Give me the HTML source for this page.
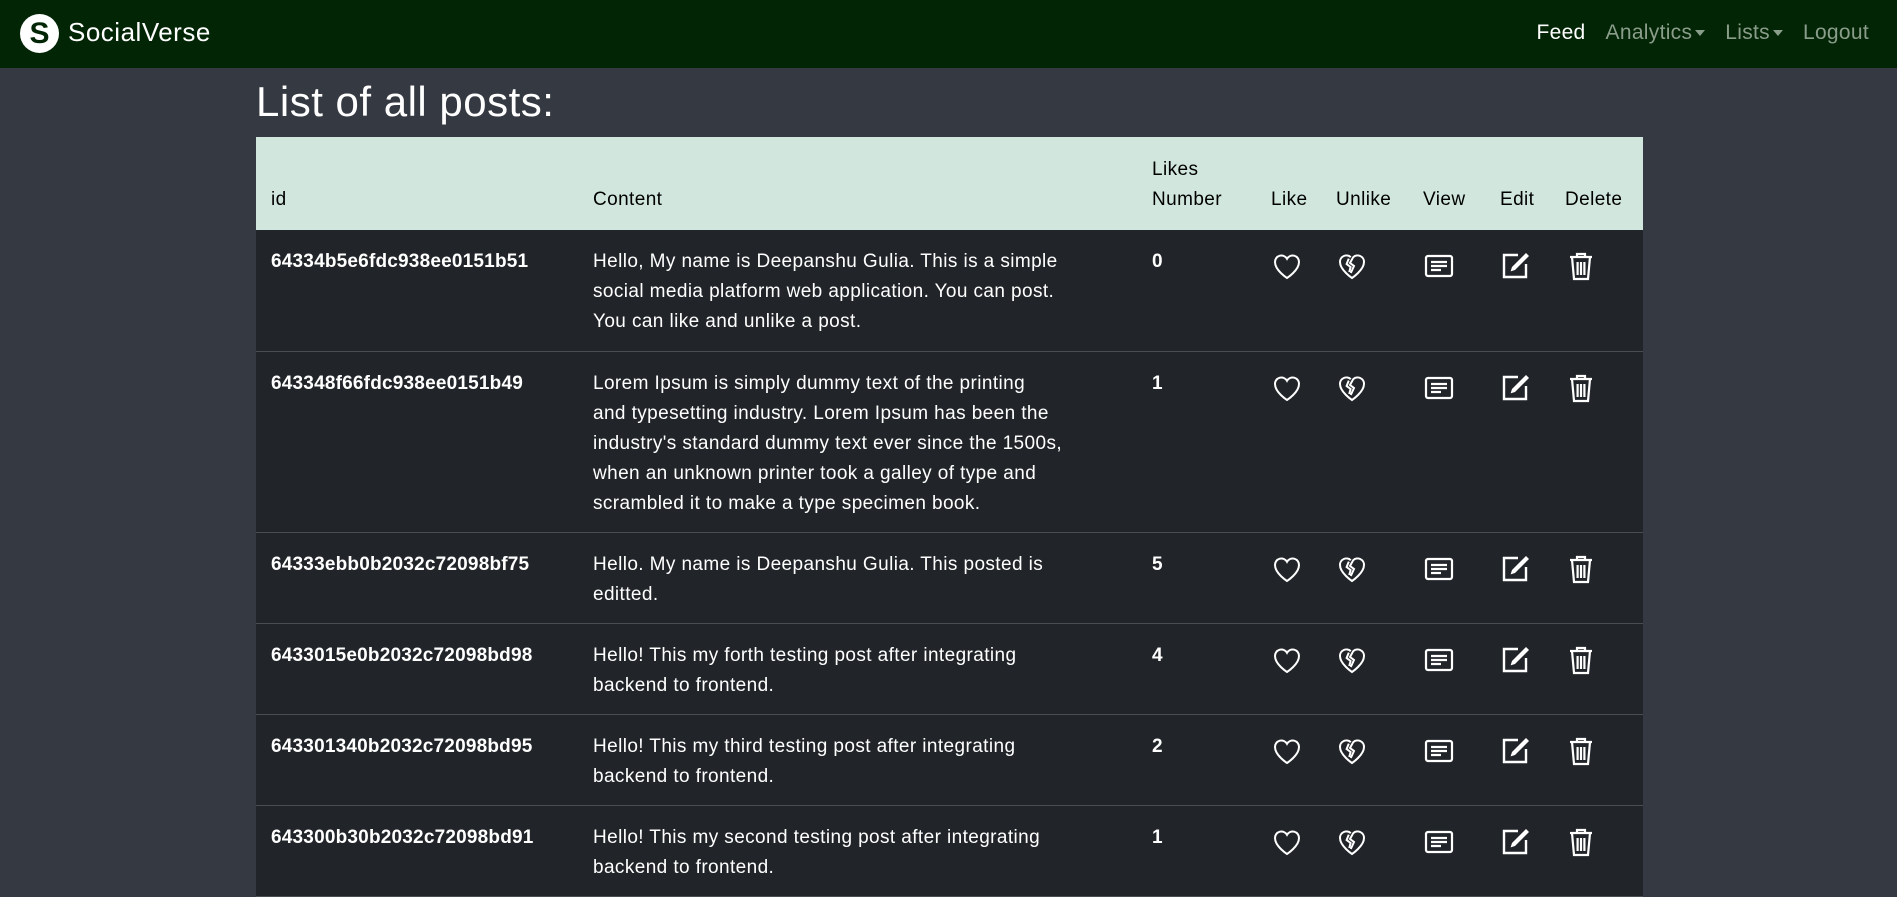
<!DOCTYPE html>
<html><head><meta charset="utf-8"><style>
*{box-sizing:border-box;margin:0;padding:0}
body{width:1897px;height:883px;overflow:hidden;background:#353941;font-family:"Liberation Sans",sans-serif;color:#fff}
.nav{height:68px;background:#022505;position:relative}
.logo{position:absolute;left:20px;top:14px;width:39px;height:39px;border-radius:50%;background:#fff;color:#022505;font:bold 30px "Liberation Sans",sans-serif;text-align:center;line-height:39px}
.brand{position:absolute;left:68px;top:17px;font-size:26px;color:#fff;letter-spacing:0.5px}
.links{position:absolute;right:28px;top:21px;font-size:21px;color:#8a9d8a;display:flex;gap:20px;letter-spacing:0.3px}
.links span.a{color:#fff}
.car{display:inline-block;border-left:5px solid transparent;border-right:5px solid transparent;border-top:6px solid #8a9d8a;vertical-align:middle;margin-left:3px}
h1{position:absolute;left:256px;top:78px;font-weight:normal;font-size:42px;letter-spacing:0.5px}
table{position:absolute;left:256px;top:137px;width:1387px;border-collapse:collapse;table-layout:fixed;font-size:19px;letter-spacing:0.4px}
th{background:#d1e7dd;color:#000;font-weight:normal;text-align:left;vertical-align:bottom;padding:0 0 15px 15px;height:93px;line-height:30px}
td{background:#212529;vertical-align:top;padding:17px 0 0 15px;line-height:30px;border-bottom:1px solid #4a4e52;white-space:nowrap}
td.id{font-weight:bold;letter-spacing:0.2px}
td.n{font-weight:bold}
svg{width:32px;height:32px;margin-top:3px}
</style></head><body>
<div class="nav"><div class="logo">S</div><div class="brand">SocialVerse</div>
<div class="links"><span class="a">Feed</span><span>Analytics<i class="car"></i></span><span>Lists<i class="car"></i></span><span>Logout</span></div></div>
<h1>List of all posts:</h1>
<table>
<colgroup><col style="width:322px"><col style="width:559px"><col style="width:119px"><col style="width:65px"><col style="width:87px"><col style="width:77px"><col style="width:65px"><col style="width:93px"></colgroup>
<tr><th>id</th><th>Content</th><th>Likes<br>Number</th><th>Like</th><th>Unlike</th><th>View</th><th>Edit</th><th>Delete</th></tr>
<tbody id="b"></tbody>
</table>
<script>
const heart='<svg viewBox="0 0 16 16"><path d="M8 14s-6-3.8-6-8a3.2 3.2 0 0 1 6-1.6A3.2 3.2 0 0 1 14 6c0 4.2-6 8-6 8z" fill="none" stroke="#fff" stroke-width="1"/></svg>';
const broken='<svg viewBox="0 0 16 16"><path d="M7.4 3.6A3.2 3.2 0 0 0 2 6c0 4 6 8 6 8s6-4 6-8a3.2 3.2 0 0 0-5.4-2.4L7 6.5l2 1.5-1.6 3.5M6.4 4.3L5.3 7l2 1.5L6.6 11" fill="none" stroke="#fff" stroke-width="1"/></svg>';
const view='<svg viewBox="0 0 16 16"><rect x="1.5" y="3" width="13" height="10" rx="1" fill="none" stroke="#fff" stroke-width="1.1"/><path d="M4 6h8M4 8h8M4 10h5" stroke="#fff" stroke-width="1.1"/></svg>';
const edit='<svg viewBox="0 0 16 16"><path d="M9 2.5H2v11h11V7" fill="none" stroke="#fff" stroke-width="1.2"/><path d="M13 1.5l1.5 1.5-7 7-2.2.7.7-2.2z" fill="#fff"/></svg>';
const del='<svg viewBox="0 0 16 16"><path d="M2.5 3.5h11M6 3.5V2h4v1.5M3.5 3.5l1 11h7l1-11M6.3 6v6.5M8 6v6.5M9.7 6v6.5" fill="none" stroke="#fff" stroke-width="1.1"/></svg>';
const rows=[["64334b5e6fdc938ee0151b51","Hello, My name is Deepanshu Gulia. This is a simple<br>social media platform web application. You can post.<br>You can like and unlike a post.","0",121],
["643348f66fdc938ee0151b49","Lorem Ipsum is simply dummy text of the printing<br>and typesetting industry. Lorem Ipsum has been the<br>industry's standard dummy text ever since the 1500s,<br>when an unknown printer took a galley of type and<br>scrambled it to make a type specimen book.","1",181],
["64333ebb0b2032c72098bf75","Hello. My name is Deepanshu Gulia. This posted is<br>editted.","5",91],
["6433015e0b2032c72098bd98","Hello! This my forth testing post after integrating<br>backend to frontend.","4",91],
["643301340b2032c72098bd95","Hello! This my third testing post after integrating<br>backend to frontend.","2",91],
["643300b30b2032c72098bd91","Hello! This my second testing post after integrating<br>backend to frontend.","1",91]];
let h='';for(const r of rows){h+=`<tr style="height:${r[3]}px"><td class="id">${r[0]}</td><td>${r[1]}</td><td class="n">${r[2]}</td><td>${heart}</td><td>${broken}</td><td>${view}</td><td>${edit}</td><td>${del}</td></tr>`}
document.getElementById('b').innerHTML=h;
</script>
</body></html>
